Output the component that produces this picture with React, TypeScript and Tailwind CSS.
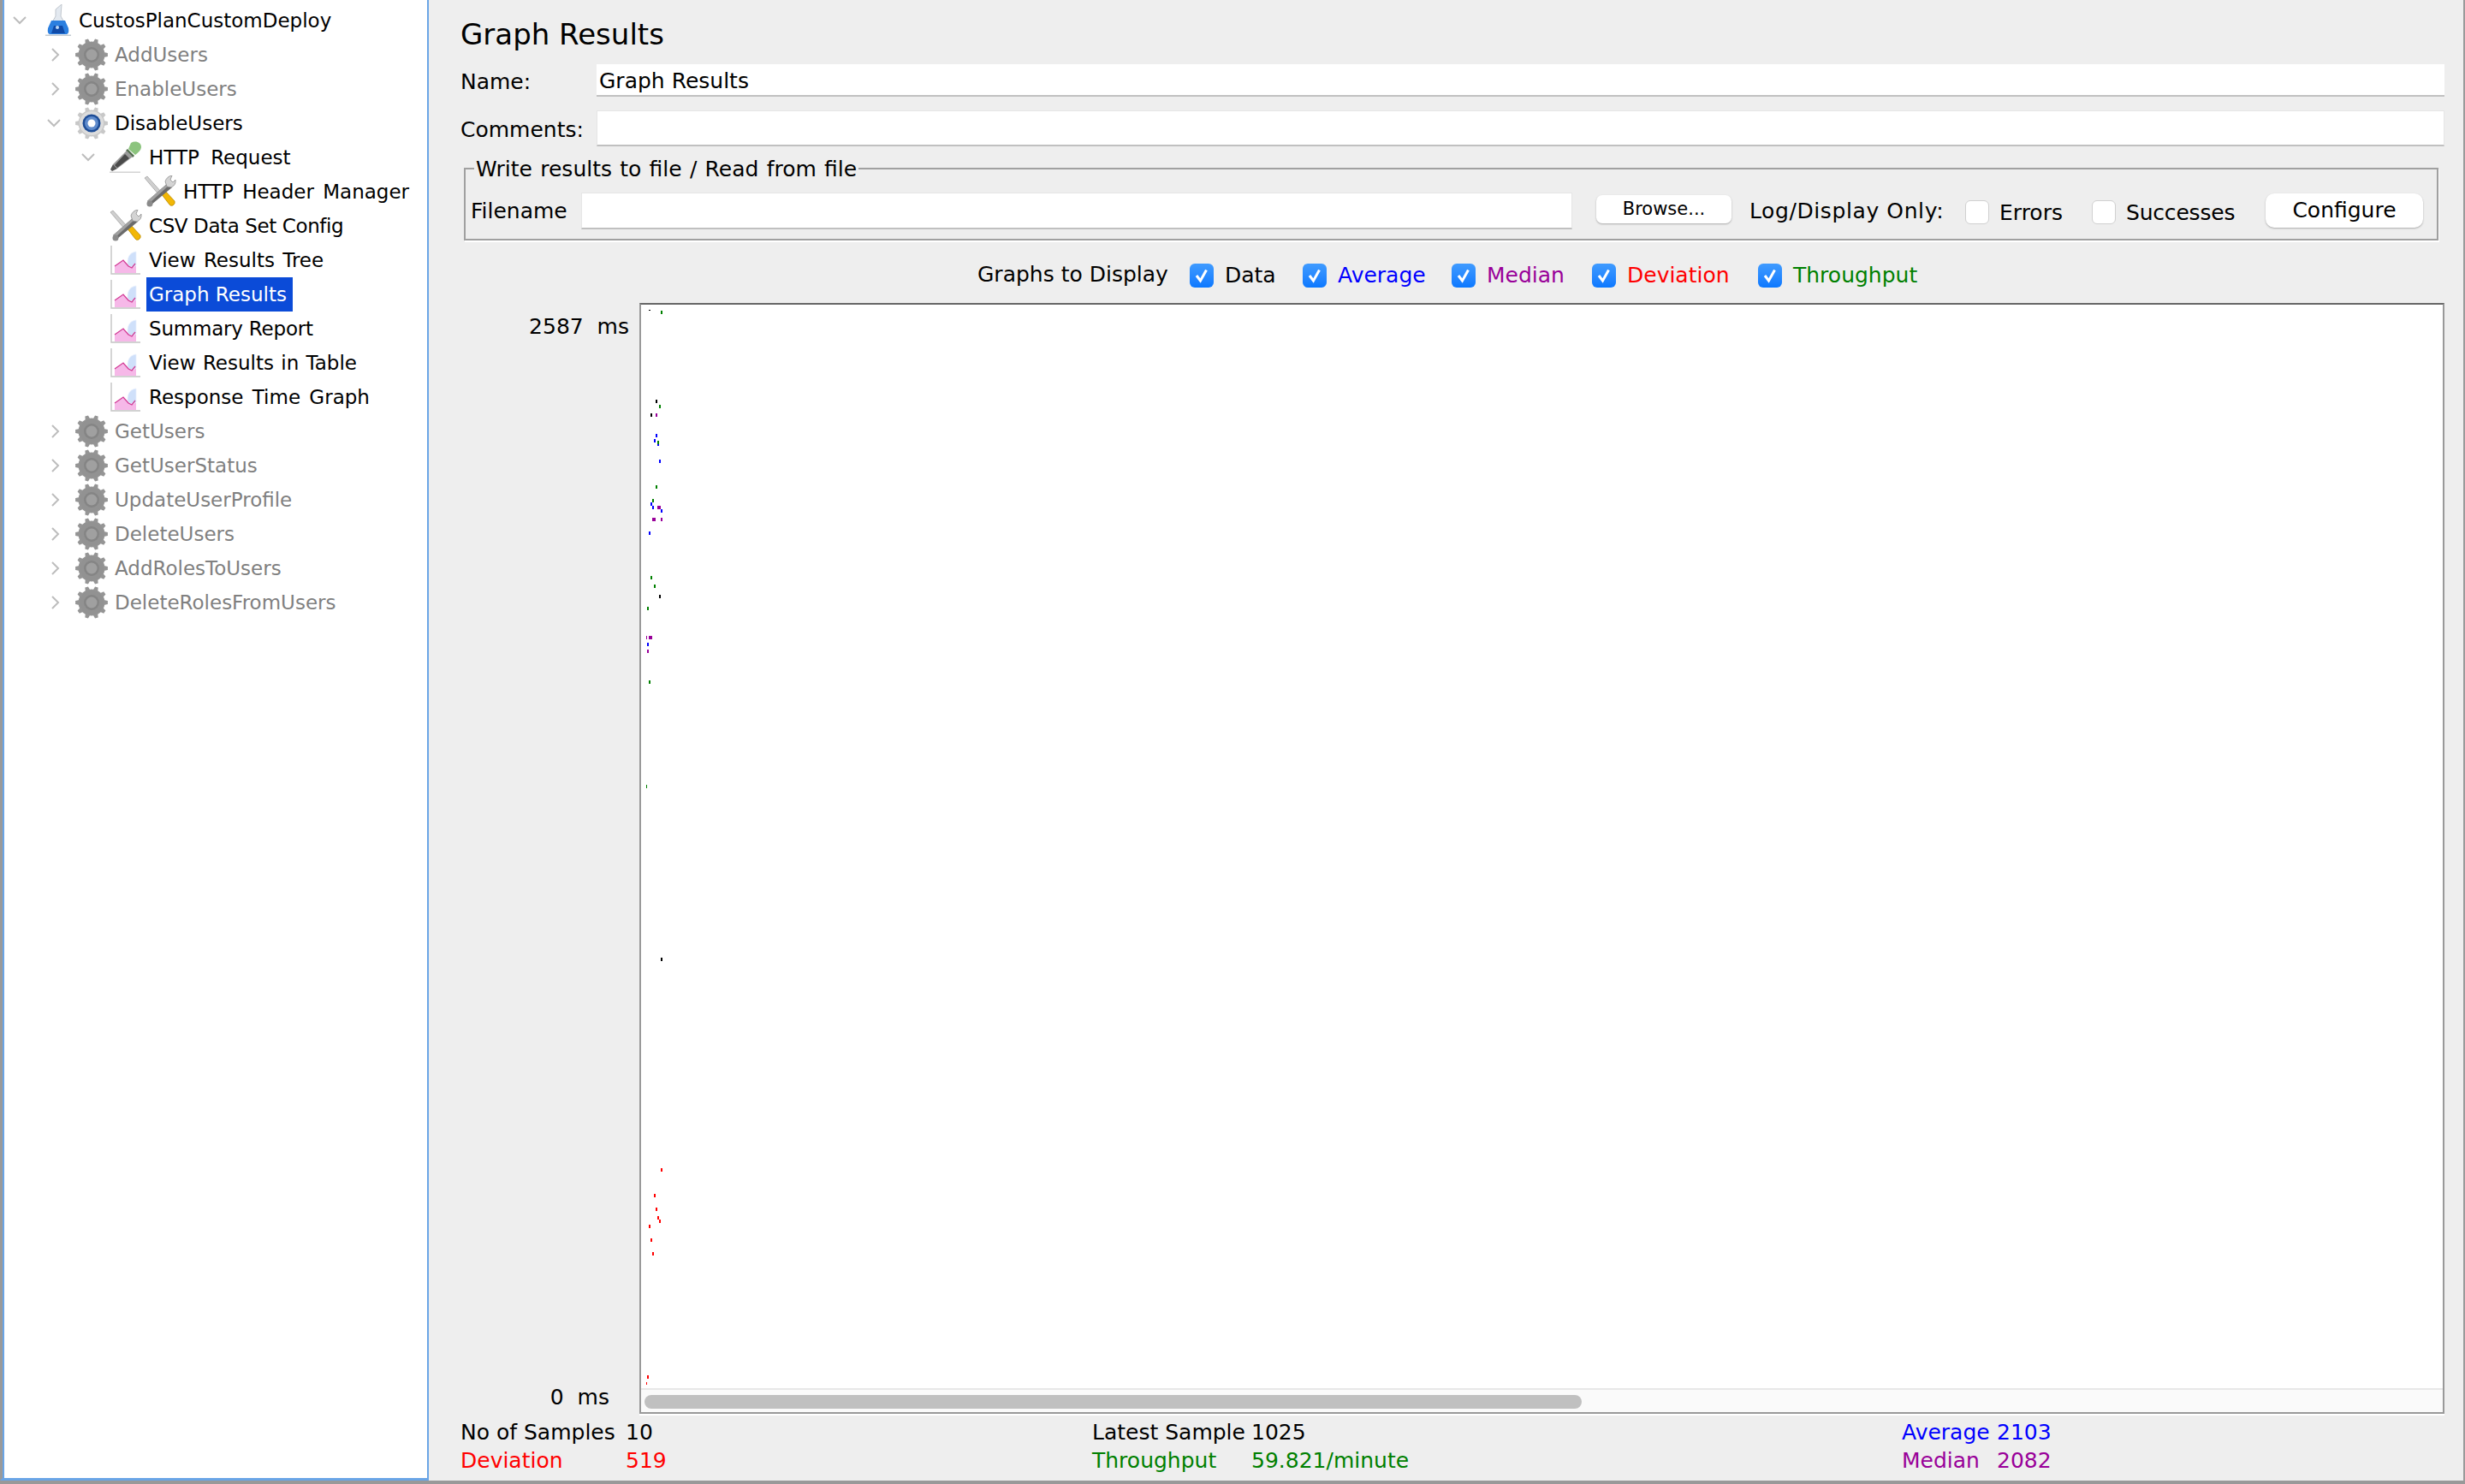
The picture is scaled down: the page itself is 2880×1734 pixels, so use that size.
import React from "react";

function gearPath(cx: number, cy: number, r1: number, r2: number, teeth: number) {
  const pts: string[] = [];
  for (let i = 0; i < teeth; i++) {
    const a = (i / teeth) * Math.PI * 2;
    const s = (Math.PI * 2) / teeth;
    const seq: [number, number][] = [
      [r1, a - s * 0.5],
      [r1, a - s * 0.28],
      [r2, a - s * 0.16],
      [r2, a + s * 0.16],
      [r1, a + s * 0.28],
    ];
    for (const [r, t] of seq) pts.push(`${(cx + r * Math.cos(t)).toFixed(2)} ${(cy + r * Math.sin(t)).toFixed(2)}`);
  }
  return "M" + pts.join("L") + "Z";
}

function Gear({ on }: { on?: boolean }) {
  return (
    <svg width="38" height="38" viewBox="0 0 38 38" className="shrink-0">
      <path d={gearPath(19, 19, 15.5, 19, 10)} fill={on ? "#c8c8c8" : "#959595"} />
      <circle cx="19" cy="19" r="14" fill={on ? "#dcdcdc" : "#929292"} />
      {on ? (
        <>
          <circle cx="19" cy="19" r="10.5" fill="#1d4c96" />
          <circle cx="19" cy="19" r="8" fill="#5f8bcc" />
          <circle cx="19" cy="19" r="4.5" fill="#ffffff" />
        </>
      ) : (
        <>
          <circle cx="19" cy="19" r="9" fill="#858585" />
          <circle cx="19" cy="19" r="6.5" fill="#a0a0a0" />
        </>
      )}
    </svg>
  );
}

function Flask() {
  return (
    <svg width="30" height="38" viewBox="0 0 30 38" className="shrink-0">
      <path d="M12 6 L19 0 L18 14 L25 26 L5 26 L12 14 Z" fill="#e3e9f0" stroke="#c0c6cd" strokeWidth="1" />
      <path d="M7 19 L23 19 L27 28 Q28 34 25 35 L5 35 Q2 34 3 28 Z" fill="#2b7fe0" />
      <path d="M10 25 L20 25 L23 34 L7 34 Z" fill="#0f4aa8" />
      <circle cx="14" cy="27" r="2" fill="#bcd9f7" />
      <rect x="0" y="35.5" width="30" height="1.5" fill="#9aa6b4" opacity="0.6" />
    </svg>
  );
}

function Dropper() {
  return (
    <svg width="38" height="38" viewBox="0 0 38 38" className="shrink-0">
      <path d="M25 2 C30 -1 37 1 37 7 C37 10 34 13 30 16 L22 9 Z" fill="#8cc47e" />
      <path d="M21 9 L29 17 L27 19 L19 11 Z" fill="#4f6a4a" />
      <path d="M20 11 L27 18 L9 32 L4 27 Z" fill="#9a9a9a" />
      <path d="M18 15 L23 20 L9 31 L6 28 Z" fill="#4a4a4a" />
      <path d="M4 27 L9 32 L3 35 L1 33 Z" fill="#555555" />
      <rect x="0" y="35.5" width="36" height="1.5" fill="#d4d4d4" />
    </svg>
  );
}

function Tools() {
  return (
    <svg width="38" height="38" viewBox="0 0 38 38" className="shrink-0">
      <path d="M1 3 L4 1 L21 20 L18 23 Z" fill="#cfcfcf" stroke="#a4a4a4" strokeWidth="0.8" />
      <path d="M20 21 L24 17 L36 30 Q37 33 34 35 Q31 36 30 34 Z" fill="#f2b705" stroke="#b98a00" strokeWidth="0.8" />
      <path d="M28 9 L33 14 L9 34 L4 30 Z" fill="#6b6b6b" />
      <path d="M28 9 L30 11 L7 32 L4 30 Z" fill="#a0a0a0" />
      <circle cx="7" cy="33" r="3.5" fill="#8a8a8a" />
      <path d="M25 7 Q27 1 33 0 L31 5 L34 8 L37 5 Q38 11 32 14 L27 13 Z" fill="#d4d4d4" stroke="#8f8f8f" strokeWidth="0.8" />
    </svg>
  );
}

function Graph() {
  return (
    <svg width="36" height="36" viewBox="0 0 36 36" className="shrink-0">
      <path d="M1 1 V34 H35" fill="none" stroke="#c4c4c4" strokeWidth="1.4" />
      <path d="M5 33 V25 L15 18 L21 24 L30 22 L30 33 Z" fill="#f6b8e8" />
      <path d="M20 22 C20 12 24 9 30 8 L30 24 C26 27 22 26 20 22 Z" fill="#cfe0fa" stroke="#e8f0fc" strokeWidth="0.8" />
      <path d="M5 25 L15 18 L21 25 L25 27 L29 22" fill="none" stroke="#d23c96" strokeWidth="1.3" />
    </svg>
  );
}

function Chevron({ dir }: { dir: "right" | "down" }) {
  return (
    <svg width="16" height="16" viewBox="0 0 16 16" className="shrink-0">
      <path
        d={dir === "right" ? "M6 1 L13 8 L6 15" : "M1 4 L8 11 L15 4"}
        fill="none"
        stroke="#bdbdbd"
        strokeWidth="2"
      />
    </svg>
  );
}

function Check({ on }: { on?: boolean }) {
  return on ? (
    <span className="w-[28px] h-[28px] shrink-0 rounded-[6px] bg-gradient-to-b from-[#3f9bff] to-[#0a78ff] flex items-center justify-center">
      <svg width="20" height="20" viewBox="0 0 20 20">
        <path d="M4 10 L8.5 16 L15.5 3.5" fill="none" stroke="#ffffff" strokeWidth="3" />
      </svg>
    </span>
  ) : (
    <span className="w-[28px] h-[28px] shrink-0 rounded-[6px] bg-white border border-[#d0d0d0]" />
  );
}

type Row = { label: string; pad: number; chev?: "right" | "down"; icon: "flask" | "gear" | "gearOn" | "dropper" | "tools" | "graph"; off?: boolean; sel?: boolean; fit?: string };

const rows: Row[] = [
  { label: "CustosPlanCustomDeploy", pad: 15, chev: "down", icon: "flask" },
  { label: "AddUsers", pad: 55, chev: "right", icon: "gear", off: true },
  { label: "EnableUsers", pad: 55, chev: "right", icon: "gear", off: true },
  { label: "DisableUsers", pad: 55, chev: "down", icon: "gearOn" },
  { label: "HTTP Request", pad: 95, chev: "down", icon: "dropper", fit: "[word-spacing:6px]" },
  { label: "HTTP Header Manager", pad: 135, icon: "tools", fit: "[word-spacing:3px]" },
  { label: "CSV Data Set Config", pad: 95, icon: "tools", fit: "tracking-[-0.4px]" },
  { label: "View Results Tree", pad: 95, icon: "graph", fit: "[word-spacing:2px]" },
  { label: "Graph Results", pad: 95, icon: "graph", sel: true },
  { label: "Summary Report", pad: 95, icon: "graph", fit: "tracking-[-0.2px]" },
  { label: "View Results in Table", pad: 95, icon: "graph", fit: "[word-spacing:1px]" },
  { label: "Response Time Graph", pad: 95, icon: "graph", fit: "[word-spacing:3px]" },
  { label: "GetUsers", pad: 55, chev: "right", icon: "gear", off: true },
  { label: "GetUserStatus", pad: 55, chev: "right", icon: "gear", off: true },
  { label: "UpdateUserProfile", pad: 55, chev: "right", icon: "gear", off: true },
  { label: "DeleteUsers", pad: 55, chev: "right", icon: "gear", off: true },
  { label: "AddRolesToUsers", pad: 55, chev: "right", icon: "gear", off: true },
  { label: "DeleteRolesFromUsers", pad: 55, chev: "right", icon: "gear", off: true },
];

function TreeIcon({ k }: { k: Row["icon"] }) {
  if (k === "flask") return <Flask />;
  if (k === "gear") return <Gear />;
  if (k === "gearOn") return <Gear on />;
  if (k === "dropper") return <Dropper />;
  if (k === "tools") return <Tools />;
  return <Graph />;
}

const BLACK = "#000000", GREEN = "#008000", BLUE = "#0000ff", PURPLE = "#990099", RED = "#ff0000";
const plot: [number, number, string, number?, number?][] = [
  [757, 362, BLACK, 2, 1], [771, 363, GREEN], [765, 467, BLACK], [769, 473, GREEN], [759, 483, BLACK], [765, 483, PURPLE],
  [765, 507, BLUE], [763, 513, BLUE], [767, 515, GREEN], [767, 519, BLUE, 2, 2], [769, 537, BLUE], [765, 567, GREEN],
  [761, 583, GREEN], [759, 587, BLUE], [761, 591, BLUE], [767, 591, PURPLE, 4, 4], [771, 595, BLUE], [761, 605, PURPLE, 4, 4],
  [771, 605, PURPLE], [757, 621, BLUE], [759, 673, GREEN], [763, 683, GREEN], [769, 695, BLACK], [755, 709, GREEN],
  [754, 743, PURPLE, 1, 4], [757, 743, PURPLE, 4, 4], [755, 751, BLUE], [755, 759, PURPLE], [757, 795, GREEN], [754, 917, GREEN, 1, 4],
  [771, 1119, BLACK], [771, 1365, RED], [763, 1395, RED], [765, 1411, RED], [767, 1421, RED], [769, 1425, RED],
  [757, 1431, RED], [759, 1447, RED], [761, 1463, RED], [755, 1607, RED], [754, 1615, RED, 1, 3],
];

const legend: { t: string; c: string; ml: string; w: string }[] = [
  { t: "Data", c: "text-black", ml: "ml-[23px]", w: "w-[57px]" },
  { t: "Average", c: "text-[#0000ff]", ml: "ml-[34px]", w: "w-[99px]" },
  { t: "Median", c: "text-[#990099]", ml: "ml-[34px]", w: "w-[88px]" },
  { t: "Deviation", c: "text-[#ff0000]", ml: "ml-[35px]", w: "w-[120px]" },
  { t: "Throughput", c: "text-[#008000]", ml: "ml-[33px]", w: "w-[149px]" },
];

export default function App() {
  return (
    <div className="font-['DejaVu_Sans','Liberation_Sans',sans-serif] w-[2880px] h-[1734px] flex bg-[#eeeeee] overflow-hidden text-[25px] text-black">
      <aside className="w-[501px] h-[1734px] shrink-0 border-b-[4px] border-b-[#999999]">
        <div className="h-full bg-white border-l-[3px] border-l-[#9a9a9a] border-r-[2px] border-r-[#6aa5e6] border-b-[3px] border-b-[#6aa5e6] pt-[4px] shadow-[inset_2px_0_0_#6aa5e6] text-[23px]">
          {rows.map((r) => (
            <div key={r.label} className="h-[40px] flex items-center" style={{ paddingLeft: r.pad - 3 }}>
              <span className="w-[16px] h-[16px] flex shrink-0">{r.chev && <Chevron dir={r.chev} />}</span>
              <span className={`flex justify-center shrink-0 ${r.icon === "flask" ? "ml-[21px] w-[32px]" : "ml-[17px] w-[38px]"}`}>
                <TreeIcon k={r.icon} />
              </span>
              <span
                className={`ml-[5px] pl-[3px] pr-[7px] h-[40px] leading-[40px] whitespace-nowrap ${r.fit ?? ""} ${
                  r.sel ? "bg-[#0b4bd8] text-white" : r.off ? "text-[#808080]" : "text-black"
                }`}
              >
                {r.label}
              </span>
            </div>
          ))}
        </div>
      </aside>

      <main className="flex-1 h-[1734px] flex flex-col border-r-[2px] border-r-[#9a9a9a] border-b-[4px] border-b-[#999999] pl-[37px] pr-[22px]">
        <div className="h-[75px] pt-[16px] text-[34px] leading-[48px]">Graph Results</div>

        <div className="flex items-center h-[38px]">
          <span className="w-[159px] pt-[3px]">Name:</span>
          <div className="flex-1 h-[38px] bg-white border-b-2 border-b-[#c0c0c0] pl-[3px] leading-[39px]">Graph Results</div>
        </div>
        <div className="flex items-center h-[42px] mt-[16px]">
          <span className="w-[159px] pt-[3px]">Comments:</span>
          <div className="flex-1 h-[42px] bg-white border border-[#e6e6e6] border-b-2 border-b-[#c0c0c0]" />
        </div>

        <div className="relative mt-[25px] ml-[4px] mr-[7px] h-[85px] border-2 border-[#a0a0a0] shadow-[1px_2px_0_#ffffff] flex items-center pl-[6px] pr-[16px] pt-[16px]">
          <span className="absolute left-[10px] top-[-15px] bg-[#eeeeee] px-[2px] leading-[30px] whitespace-nowrap [word-spacing:1.3px]">Write results to file / Read from file</span>
          <span className="w-[129px]">Filename</span>
          <div className="w-[1158px] h-[43px] bg-white border border-[#e6e6e6] border-b-2 border-b-[#c0c0c0]" />
          <button className="ml-[28px] w-[158px] h-[33px] rounded-[7px] bg-white shadow-[0_1px_2px_#aaaaaa] text-[21px] leading-[33px] mt-[-4px]">Browse...</button>
          <span className="ml-[21px] w-[228px] whitespace-nowrap tracking-[0.6px]">Log/Display Only:</span>
          <span className="ml-[24px] flex items-center mt-[3px]"><Check /></span>
          <span className="ml-[12px] w-[71px] mt-[5px] whitespace-nowrap">Errors</span>
          <span className="ml-[37px] flex items-center mt-[3px]"><Check /></span>
          <span className="ml-[12px] mt-[5px] whitespace-nowrap tracking-[-0.2px]">Successes</span>
          <button className="ml-auto w-[184px] h-[40px] rounded-[10px] bg-white shadow-[0_1px_2px_#aaaaaa] leading-[38px] mt-[-2px]">Configure</button>
        </div>

        <div className="h-[73px] pt-[9px] flex items-center pl-[604px]">
          <span className="w-[225px] whitespace-nowrap mt-[-2px]">Graphs to Display</span>
          {legend.map((l) => (
            <React.Fragment key={l.t}>
              <span className={`${l.ml} flex`}><Check on /></span>
              <span className={`ml-[13px] whitespace-nowrap ${l.w} ${l.c}`}>{l.t}</span>
            </React.Fragment>
          ))}
        </div>

        <div className="flex-1 min-h-0 flex">
          <div className="w-[209px] flex flex-col justify-between items-end pt-[13px] pb-[4px] shrink-0">
            <span className="pr-[12px] leading-[30px] whitespace-pre">2587  ms</span>
            <span className="pr-[35px] leading-[30px] whitespace-pre">0  ms</span>
          </div>
          <div className="relative flex-1 h-[1298px] bg-white border-t-2 border-t-[#666666] border-l-2 border-l-[#999999] border-r-2 border-r-[#999999] border-b-[2px] border-b-[#999999] shadow-[0_2px_0_#ffffff] flex flex-col justify-end">
            <svg className="absolute left-0 top-0" width="100" height="1280" shapeRendering="crispEdges">
              {plot.map(([x, y, c, w, h], i) => (
                <rect key={i} x={x - 748} y={y - 356} width={w ?? 2} height={h ?? 4} fill={c} />
              ))}
            </svg>
            <div className="h-[28px] bg-[#fafafa] border-t-2 border-t-[#e8e8e8] pt-[6px] pl-[4px]">
              <div className="w-[1095px] h-[16px] rounded-full bg-[#c0c0c0]" />
            </div>
          </div>
        </div>

        <div className="h-[78px] pt-[5px] grid grid-cols-[738px_946px_1fr] content-start text-[25px] leading-[33px]">
          <div className="whitespace-pre"><span className="inline-block w-[193px]">No of Samples</span>10</div>
          <div className="whitespace-pre"><span className="inline-block w-[186px]">Latest Sample</span>1025</div>
          <div className="whitespace-pre text-[#0000ff]"><span className="inline-block w-[111px]">Average</span>2103</div>
          <div className="whitespace-pre text-[#ff0000]"><span className="inline-block w-[193px]">Deviation</span>519</div>
          <div className="whitespace-pre text-[#008000]"><span className="inline-block w-[186px]">Throughput</span>59.821/minute</div>
          <div className="whitespace-pre text-[#990099]"><span className="inline-block w-[111px]">Median</span>2082</div>
        </div>
      </main>
    </div>
  );
}
